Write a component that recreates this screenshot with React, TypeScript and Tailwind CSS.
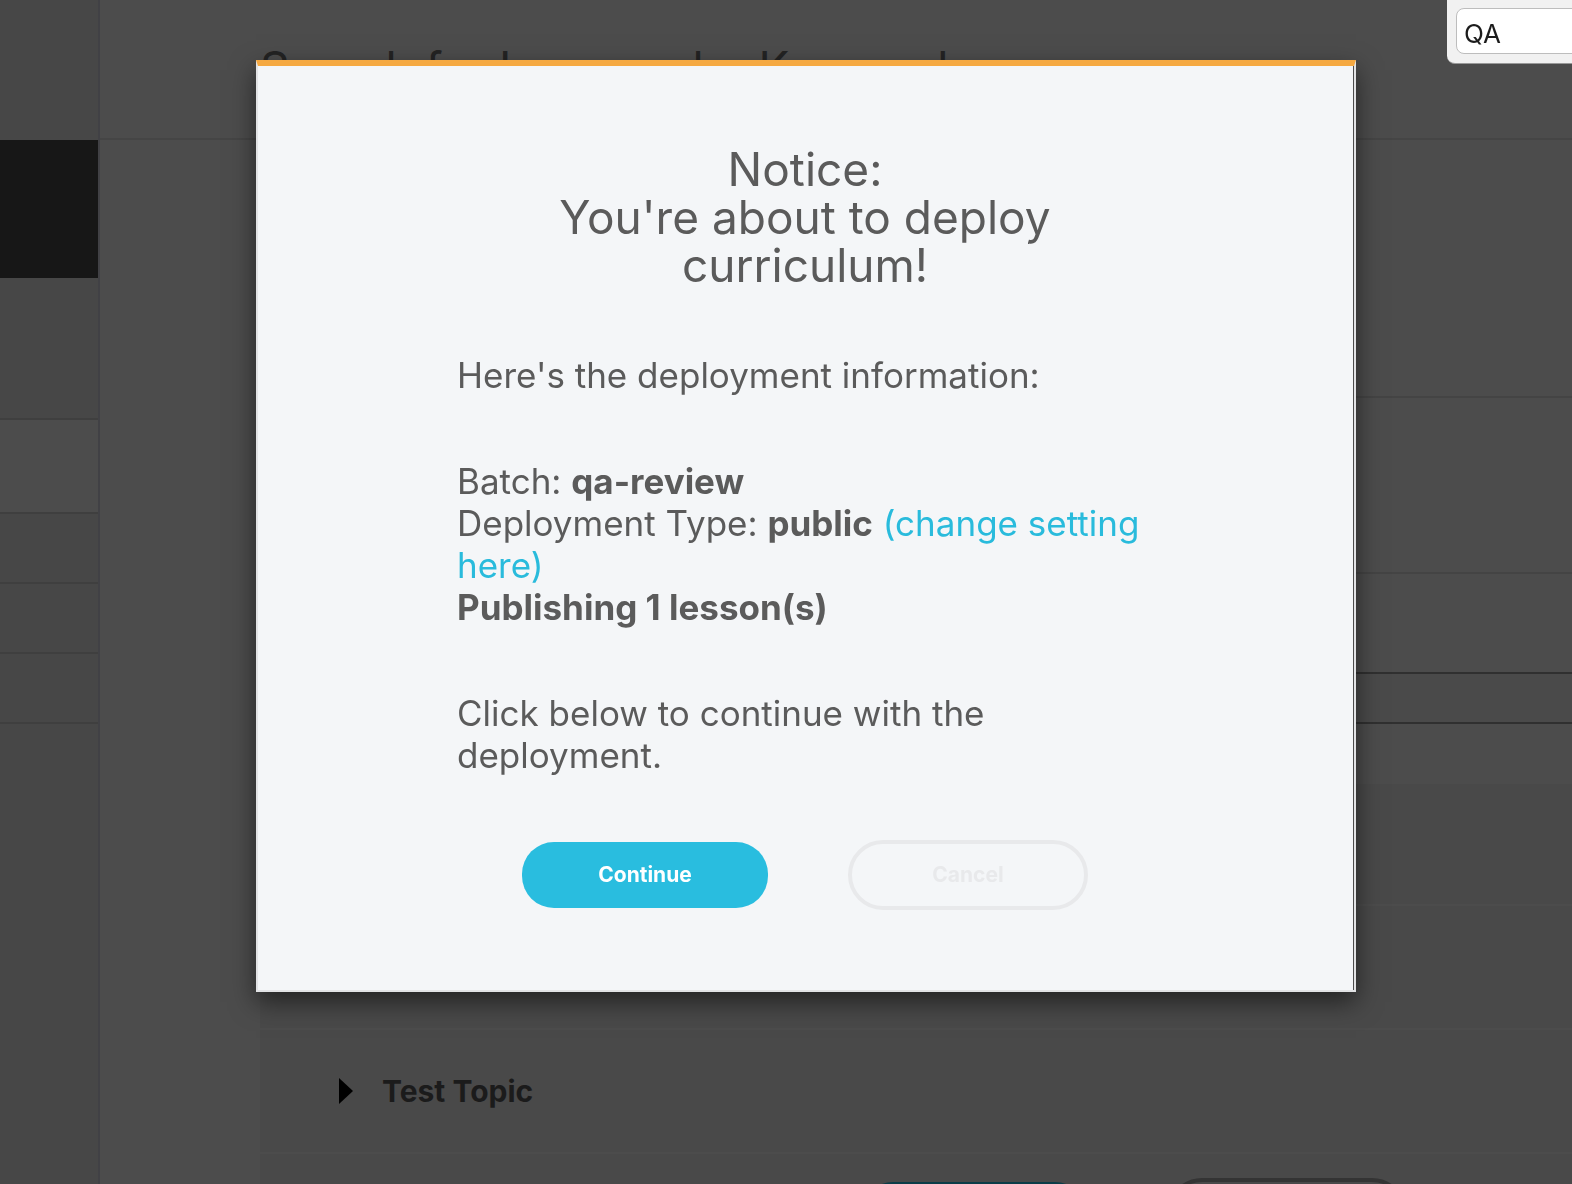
import React from 'react';

function Sidebar() {
  return (
    <nav className="flex w-[100px] shrink-0 flex-col border-r-2 border-[#414145] bg-[#474747]">
      <div className="h-[140px] shrink-0" />
      <div className="h-[138px] shrink-0 bg-[#171717]" />
      <div className="h-[142px] shrink-0 border-b-2 border-[#3f3f3f]" />
      <div className="h-[94px] shrink-0 border-b-2 border-[#3f3f3f] bg-[#4c4c4c]" />
      <div className="h-[70px] shrink-0 border-b-2 border-[#3f3f3f]" />
      <div className="h-[70px] shrink-0 border-b-2 border-[#3f3f3f]" />
      <div className="h-[70px] shrink-0 border-b-2 border-[#3f3f3f]" />
    </nav>
  );
}

function TopicList() {
  return (
    <section className="flex-1 bg-[#494949]">
      <div className="h-[122px] border-b-2 border-[#4c4c4c]" />
      <div className="h-[124px] border-b-2 border-[#4c4c4c]" />
      <div className="flex h-[124px] items-center border-b-2 border-[#4c4c4c] pl-[79px]">
        <svg className="mr-[29px] h-[26px] w-[14px]" viewBox="0 0 14 26" aria-hidden="true">
          <path d="M0 0L14 13L0 26Z" fill="#000" />
        </svg>
        <h2 className="text-[30px] leading-9 font-bold text-[#1b1b1b]">Test Topic</h2>
      </div>
      <div className="flex justify-end gap-20 pt-6 pr-[165px]">
        <button
          type="button"
          aria-label="Deploy"
          className="mt-1 h-[66px] w-[226px] rounded-[32px] bg-[#0c3d48]"
        />
        <button
          type="button"
          aria-label="Preview"
          className="h-[70px] w-60 rounded-[35px] border-4 border-[#343434]"
        />
      </div>
    </section>
  );
}

function Page() {
  return (
    <main className="flex min-w-0 flex-1 flex-col bg-[#4c4c4c]">
      <header className="h-[140px] shrink-0 border-b-2 border-[#454545] pt-11 pl-40">
        <h1 className="text-[46px] leading-[48px] whitespace-nowrap text-[#232323]">
          Search for Lessons by Keyword
        </h1>
      </header>
      <div className="ml-40 flex flex-1 flex-col">
        <div className="h-[258px] shrink-0 border-b-2 border-[#444444]" />
        <div className="h-[176px] shrink-0 border-b-2 border-[#444444]" />
        <div className="h-[100px] shrink-0 border-b-2 border-[#303030]" />
        <div className="h-[50px] shrink-0 border-b-2 border-[#303030] bg-[#4a4a4a]" />
        <div className="h-[60px] shrink-0" />
        <TopicList />
      </div>
    </main>
  );
}

function DeployDialog() {
  return (
    <div className="fixed inset-0 flex items-start overflow-hidden pt-[60px] pr-[216px] pl-64">
      <div
        role="dialog"
        aria-modal="true"
        aria-labelledby="deploy-title"
        className="flex-1 border-2 border-t-[6px] border-[#e2e3e5] border-t-[#f5a942] bg-[#f4f6f8] shadow-[0_10px_24px_rgba(0,0,0,0.52)]"
      >
        <div className="border-r border-[#4c4c4c] pt-[79px] pr-[200px] pb-20 pl-[199px] text-[#5b5b5b]">
          <h2 id="deploy-title" className="text-center text-[46px] leading-[48px]">
            Notice:
            <br />
            You're about to deploy curriculum!
          </h2>
          <div className="mt-[65px] flex flex-col gap-16 text-[35px] leading-[42px]">
            <p>Here's the deployment information:</p>
            <p>
              Batch: <strong>qa-review</strong>
              <br />
              Deployment Type: <strong>public</strong>{' '}
              <a href="#settings" className="text-[#29bbdc]">
                (change setting here)
              </a>
              <br />
              <strong>Publishing 1 lesson(s)</strong>
            </p>
            <p>Click below to continue with the deployment.</p>
          </div>
          <div className="mt-16 flex items-center justify-center gap-20 text-[21px] font-bold">
            <button type="button" className="h-[66px] w-[246px] rounded-[32px] bg-[#29bddf] text-white">
              Continue
            </button>
            <button
              type="button"
              className="h-[70px] w-60 rounded-[35px] border-4 border-[#e8e9eb] text-[#e8e9eb]"
            >
              Cancel
            </button>
          </div>
        </div>
      </div>
    </div>
  );
}

function FindBar() {
  return (
    <div className="fixed top-0 right-0 h-16 w-[125px] overflow-hidden rounded-bl-lg border-b border-[#999999] bg-[#f1f1f1] pt-2 pl-[9px]">
      <input
        type="text"
        aria-label="Find in page"
        defaultValue="QA"
        className="h-[46px] w-[140px] rounded-lg border border-[#bdbdbd] bg-white pt-1 pl-[7px] text-[26px] text-[#1c1c1c]"
      />
    </div>
  );
}

export default function App() {
  return (
    <div className="flex h-screen overflow-hidden bg-[#4c4c4c] font-['Inter','Liberation_Sans',sans-serif]">
      <Sidebar />
      <Page />
      <DeployDialog />
      <FindBar />
    </div>
  );
}
